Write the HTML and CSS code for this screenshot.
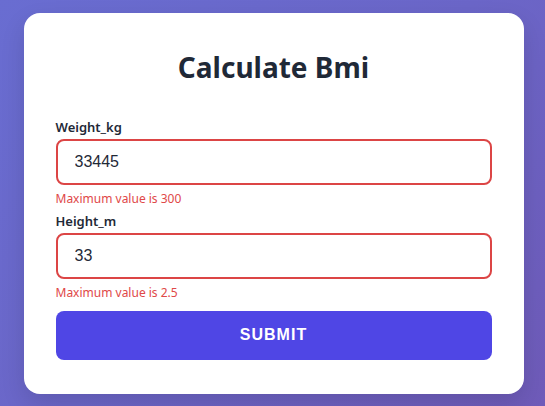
FILE: index.html
```html
<!DOCTYPE html>
<html lang="en">
<head>
<meta charset="utf-8">
<title>Calculate Bmi</title>
<link rel="stylesheet" href="styles.css">
</head>
<body>
  <main class="card">
    <h1 class="title">Calculate Bmi</h1>
    <form class="form">
      <div class="field">
        <label class="label" for="w">Weight_kg</label>
        <input class="input" id="w" type="text" value="33445">
        <p class="error">Maximum value is 300</p>
      </div>
      <div class="field">
        <label class="label" for="h">Height_m</label>
        <input class="input" id="h" type="text" value="33">
        <p class="error">Maximum value is 2.5</p>
      </div>
      <button class="submit" type="button">SUBMIT</button>
    </form>
  </main>
</body>
</html>
```
FILE: styles.css
```css
* { box-sizing: border-box; }
html, body { height: 100%; }
body {
  margin: 0;
  padding-left: 2px;
  display: flex;
  align-items: center;
  justify-content: center;
  background: linear-gradient(135deg, #696dd1 0%, #6b66c8 50%, #6f5bb9 100%);
  font-family: "Noto Sans", "Open Sans", sans-serif;
}
.card {
  width: 500px;
  background: #fff;
  border-radius: 16px;
  padding: 32px 32px 34px;
  box-shadow: 0 10px 25px rgba(0,0,0,0.12);
}
.title {
  margin: 0 0 29px;
  text-align: center;
  font-size: 28px;
  line-height: 44px;
  font-weight: 700;
  color: #1f2937;
}
.form { display: flex; flex-direction: column; }
.field { display: flex; flex-direction: column; }
.label {
  font-size: 13px;
  line-height: 18px;
  font-weight: 600;
  color: #1f2937;
  margin-bottom: 3px;
}
.input {
  height: 46px;
  width: 100%;
  border: 2px solid #dc4545;
  border-radius: 8px;
  padding: 0 17px;
  font-family: "Liberation Sans", Arial, sans-serif;
  font-size: 16px;
  color: #1f2937;
  outline: none;
}
.error {
  margin: 5px 0 4px;
  font-size: 12px;
  line-height: 18px;
  color: #e04848;
}
.submit {
  margin-top: 5px;
  height: 49px;
  border: none;
  border-radius: 8px;
  background: #4f46e5;
  color: #fff;
  font-family: "Liberation Sans", Arial, sans-serif;
  font-weight: 700;
  font-size: 16px;
  letter-spacing: 1px;
}
```
